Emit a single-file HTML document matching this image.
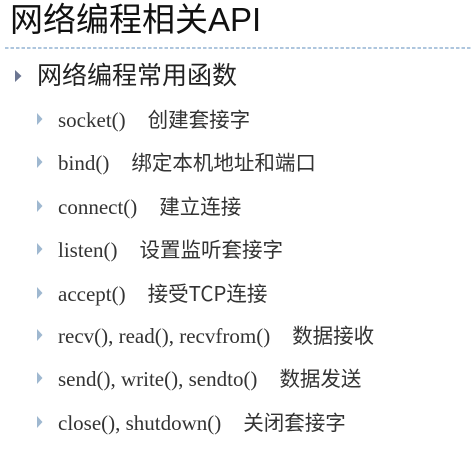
<!DOCTYPE html>
<html><head><meta charset="utf-8"><style>
html,body{margin:0;padding:0;background:#fff;width:471px;height:465px;overflow:hidden;position:relative}
.t{position:absolute;left:10px;top:0px;font:33px/40px "Liberation Sans","Noto Sans CJK SC",sans-serif;color:#111;white-space:nowrap}
.hr{position:absolute;left:0;top:46px}
.l1{position:absolute;left:37px;top:61px;font:25px/30px "Liberation Sans","Noto Sans CJK SC",sans-serif;color:#222;white-space:nowrap}
.b1{position:absolute;left:15px;top:70px}
.r{position:absolute;left:58px;font:21px/24px "Liberation Serif","Noto Sans CJK SC",serif;color:#333;white-space:nowrap}
.r span{font-family:"Noto Sans CJK SC",sans-serif;margin-left:22px;font-size:20.5px}
.b2{position:absolute;left:37px}
</style></head><body>
<div class="t">网络编程相关API</div>
<svg class="hr" width="471" height="4"><line x1="5" y1="2" x2="471" y2="2" stroke="#93b4d3" stroke-width="1.5" stroke-dasharray="3.5 2"/></svg>
<svg class="b1" width="7" height="12"><polygon points="0,0 6.5,6 0,12" fill="#6c7692"/></svg>
<div class="l1">网络编程常用函数</div>

<svg class="b2" style="top:113px" width="6" height="12"><polygon points="0,0 5.5,6 0,12" fill="#9fb8d0"/></svg><div class="r" style="top:106px">socket()<span>创建套接字</span></div>
<svg class="b2" style="top:156px" width="6" height="12"><polygon points="0,0 5.5,6 0,12" fill="#9fb8d0"/></svg><div class="r" style="top:149px">bind()<span>绑定本机地址和端口</span></div>
<svg class="b2" style="top:200px" width="6" height="12"><polygon points="0,0 5.5,6 0,12" fill="#9fb8d0"/></svg><div class="r" style="top:193px">connect()<span>建立连接</span></div>
<svg class="b2" style="top:243px" width="6" height="12"><polygon points="0,0 5.5,6 0,12" fill="#9fb8d0"/></svg><div class="r" style="top:236px">listen()<span>设置监听套接字</span></div>
<svg class="b2" style="top:287px" width="6" height="12"><polygon points="0,0 5.5,6 0,12" fill="#9fb8d0"/></svg><div class="r" style="top:280px">accept()<span>接受TCP连接</span></div>
<svg class="b2" style="top:329px" width="6" height="12"><polygon points="0,0 5.5,6 0,12" fill="#9fb8d0"/></svg><div class="r" style="top:322px">recv(), read(), recvfrom()<span>数据接收</span></div>
<svg class="b2" style="top:372px" width="6" height="12"><polygon points="0,0 5.5,6 0,12" fill="#9fb8d0"/></svg><div class="r" style="top:365px">send(), write(), sendto()<span>数据发送</span></div>
<svg class="b2" style="top:416px" width="6" height="12"><polygon points="0,0 5.5,6 0,12" fill="#9fb8d0"/></svg><div class="r" style="top:409px">close(), shutdown()<span>关闭套接字</span></div>
</body></html>
